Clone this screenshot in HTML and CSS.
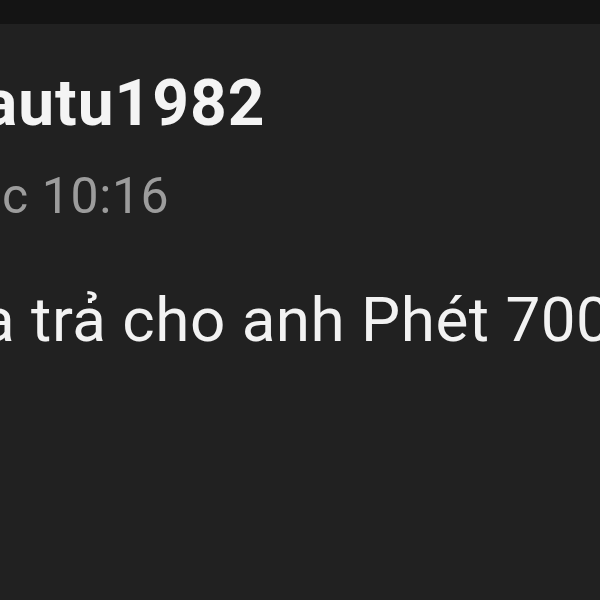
FILE: index.html
```html
<!DOCTYPE html>
<html lang="vi">
<head>
  <meta charset="UTF-8">
  <meta name="viewport" content="width=device-width, initial-scale=1.0">
  <title>Tin nhắn</title>
  <link rel="stylesheet" href="styles.css">
</head>
<body>
  <header class="topbar"></header>
  <main class="message">
    <div class="sender">autu1982</div>
    <div class="time">c 10:16</div>
    <div class="text">a trả cho anh Phét 700k</div>
  </main>
</body>
</html>
```
FILE: styles.css
```css
body {
  margin: 0;
  height: 100vh;
  overflow: hidden;
  background-color: #212121;
  font-family: Roboto, "Noto Sans", sans-serif;
}

.topbar {
  height: 24px;
  background-color: #141414;
}

.message {
  padding-top: 48px;
  white-space: nowrap;
}

.sender {
  margin-left: -17px;
  font-size: 64px;
  font-weight: bold;
  letter-spacing: 1px;
  line-height: 1;
  color: #f4f4f4;
}

.time {
  margin-top: 35px;
  margin-left: 2px;
  font-size: 50px;
  letter-spacing: 0.6px;
  line-height: 1;
  color: #9c9c9c;
}

.text {
  margin-top: 68px;
  margin-left: -19px;
  font-size: 62px;
  letter-spacing: 0.5px;
  line-height: 1;
  color: #f2f2f2;
}
```
